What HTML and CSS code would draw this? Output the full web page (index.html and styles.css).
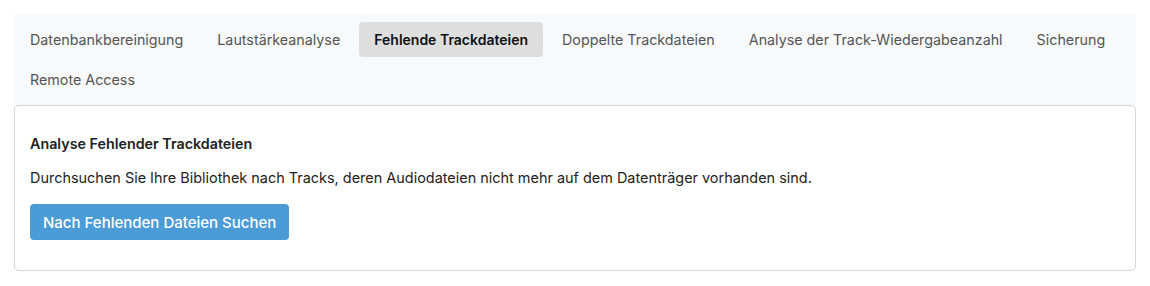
FILE: index.html
```html
<!DOCTYPE html>
<html lang="de">
<head>
    <meta charset="UTF-8">
    <meta name="viewport" content="width=device-width, initial-scale=1.0">
    <title>Bibliothekswerkzeuge</title>
    <link rel="stylesheet" href="styles.css">
</head>
<body>
    <div class="container">
        <div class="tab-bar">
            <button class="tab">Datenbankbereinigung</button>
            <button class="tab">Lautstärkeanalyse</button>
            <button class="tab active">Fehlende Trackdateien</button>
            <button class="tab">Doppelte Trackdateien</button>
            <button class="tab">Analyse der Track-Wiedergabeanzahl</button>
            <button class="tab">Sicherung</button>
            <button class="tab">Remote Access</button>
        </div>

        <div class="panel">
            <h3>Analyse Fehlender Trackdateien</h3>
            <p>Durchsuchen Sie Ihre Bibliothek nach Tracks, deren Audiodateien nicht mehr auf dem Datenträger vorhanden sind.</p>
            <button class="btn-primary">Nach Fehlenden Dateien Suchen</button>
        </div>
    </div>
</body>
</html>
```

FILE: styles.css
```css
* {
    margin: 0;
    padding: 0;
    box-sizing: border-box;
    font-family: Inter, 'Noto Sans', sans-serif;
}

body {
    background-color: #ffffff;
    padding: 14px;
}

.container {
    width: 1122px;
}

.tab-bar {
    display: flex;
    flex-wrap: wrap;
    gap: 5px 4px;
    background-color: #f8f9fa;
    padding: 8px 1px;
}

.tab {
    height: 35px;
    padding: 0 15px;
    border: none;
    border-radius: 4px;
    background: transparent;
    color: #555555;
    font-size: 14.3px;
    cursor: pointer;
}

.tab.active {
    background-color: #dedede;
    color: #111111;
    font-size: 14px;
    font-weight: 600;
}

.panel {
    border: 1px solid #d4d4d4;
    border-radius: 5px;
    padding: 28px 15px 30px 15px;
}

.panel h3 {
    font-size: 14.3px;
    font-weight: 600;
    color: #222222;
    line-height: 20px;
    margin-bottom: 14px;
}

.panel p {
    font-size: 14.45px;
    color: #222222;
    line-height: 20px;
    margin-bottom: 16px;
}

.btn-primary {
    height: 36px;
    padding: 0 13px;
    border: none;
    border-radius: 4px;
    background-color: #4a9bd6;
    color: #ffffff;
    font-size: 15px;
    font-weight: 500;
    cursor: pointer;
}
```
